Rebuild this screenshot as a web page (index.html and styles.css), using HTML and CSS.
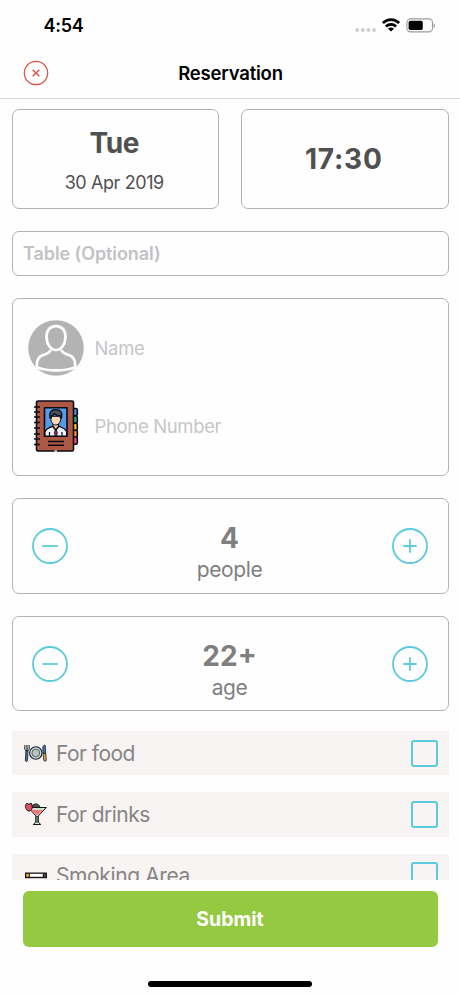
FILE: index.html
```
<!DOCTYPE html>
<html lang="en">
<head>
<meta charset="utf-8">
<meta name="viewport" content="width=device-width, initial-scale=1">
<title>Reservation</title>
<link rel="stylesheet" href="styles.css">
</head>
<body>
<div class="screen">
  <div class="status">
    <span class="clock">4:54</span>
    <div class="indicators">
      <svg class="signal" width="22" height="4" viewBox="0 0 22 4" fill="#cfcfcf"><circle cx="2.2" cy="2" r="2"/><circle cx="7.8" cy="2" r="2"/><circle cx="13.4" cy="2" r="2"/><circle cx="19" cy="2" r="2"/></svg>
      <svg class="wifi" width="18" height="14" viewBox="0 0 18 14" fill="none" stroke="#000" stroke-width="2.7"><path d="M.9 5.1C5.4.5 12.6.5 17.1 5.1"/><path d="M3.9 8.5C6.8 5.7 11.2 5.7 14.1 8.5"/><path d="M9 13.4 6 10.7c1.8-1.6 4.2-1.6 6 0z" fill="#000" stroke="none"/></svg>
      <svg class="battery" width="30" height="15" viewBox="0 0 30 15"><rect x=".9" y=".9" width="25.6" height="13" rx="3.8" fill="none" stroke="#9c9c9c" stroke-width="1.1"/><rect x="2.6" y="2.7" width="14.2" height="9.4" rx="1.8"/><path d="M27.6 5.2c1.9.7 1.9 3.9 0 4.6z" fill="#9c9c9c"/></svg>
    </div>
  </div>
  <header class="header">
    <svg class="close" width="26" height="26" viewBox="0 0 26 26" fill="none" stroke="#e0503f" stroke-width="1.2"><circle cx="13" cy="13" r="11.7"/><path d="m9.7 9.7 6.6 6.6m0-6.6-6.6 6.6" stroke-width="1.4"/></svg>
    <h1 class="title">Reservation</h1>
  </header>
  <main class="content">
    <section class="when">
      <div class="card date"><strong class="big day">Tue</strong><span class="full-date">30 Apr 2019</span></div>
      <div class="card time"><strong class="big hour">17:30</strong></div>
    </section>
    <div class="card table"><span class="table-label">Table (Optional)</span></div>
    <section class="card contact">
      <div class="field">
        <svg class="avatar" width="56" height="56" viewBox="0 0 56 56"><circle cx="28" cy="28" r="27.8" fill="#b3b3b3"/><g fill="none" stroke="#fff" stroke-width="2.7" stroke-linecap="round" stroke-linejoin="round"><path d="M28 6.2c-6.4 0-9.8 4.6-9.5 10.8.3 7.500 4 13 9.500 13s9.200-5.500 9.500-13C37.800 10.800 34.400 6.200 28 6.200z"/><path d="M22.200 30.900c-1.700 2.600-4.700 3.200-7.800 4.400-4.600 1.700-5.500 5-5.700 10.200-.1 1.300.4 1.800 1.500 2.200 10.300 3.600 25.300 3.600 35.600 0 1.100-.4 1.600-.9 1.500-2.200-.2-5.200-1.100-8.500-5.700-10.200-3.100-1.200-6.100-1.800-7.800-4.400"/></g></svg>
        <span class="placeholder name">Name</span>
      </div>
      <div class="field">
        <svg class="book" width="56" height="56" viewBox="0 0 56 56" stroke="#0a0a12" stroke-width="1.6" stroke-linejoin="round">
          <rect x="43" y="10.5" width="6.3" height="7.2" rx="1.5" fill="#438fe8"/><rect x="43" y="18" width="6.3" height="7.2" rx="1.5" fill="#22b78e"/><rect x="43" y="25.3" width="6.3" height="7.2" rx="1.5" fill="#f5be39"/><rect x="43" y="32.3" width="6.3" height="7.2" rx="1.5" fill="#f39b2c"/><rect x="43" y="39" width="6.3" height="7.2" rx="1.5" fill="#ee5370"/>
          <rect x="8.5" y="3" width="37" height="50" rx="1.5" fill="#ad5745"/>
          <path d="M6 9h6M6 14h6M6 19h6M6 24.5h6M6 30h6M6 36h6M6 41h6M6 46.5h6" stroke-width="1.5"/>
          <rect x="16.5" y="9.7" width="22.5" height="28.6" fill="#559bea"/>
          <path d="M17 38v-4c.5-3.5 4.5-4.7 8.5-6h4.7c4 1.3 8 2.5 8.4 6v4z" fill="#edf2fa" stroke-width="1.2"/>
          <path d="M25 25v4.2l2.8 3 2.8-3V25z" fill="#f1c49d" stroke-width="1"/>
          <path d="M22.7 18.3c-.2 5 1.7 8.7 5.1 8.7s5.3-3.7 5.1-8.7z" fill="#ffd9b3" stroke-width="1"/>
          <path d="M22 20c-1.3-5.4.8-8.4 5.8-8.4s7.1 3 5.8 8.4h-1.2v-2.7c-2.8.6-5-.4-6.300-1.800-.3 1.400-1.300 2.100-2.700 2.300V20z" fill="#4a515b" stroke-width="1.2"/>
          <path d="m27.800 31-1.300 3.200.5 3.800h1.700l.5-3.800z" fill="#b82e48" stroke-width=".9"/><path d="m24.500 28 3.300 4 3.300-4M21.500 34v4M34 34v4" fill="none" stroke-width="1.2"/>
          <path d="M20 43.500h16M20 47.300h16"/><path d="M26.500 53h2.500" stroke="#e9d7cf"/>
        </svg>
        <span class="placeholder phone">Phone Number</span>
      </div>
    </section>
    <section class="card stepper people">
      <svg class="step" width="38" height="38" viewBox="0 0 38 38"><circle cx="19" cy="19" r="17"/><path d="M11.3 19h15.5"/></svg>
      <div class="amount"><strong class="big">4</strong><span class="unit">people</span></div>
      <svg class="step" width="38" height="38" viewBox="0 0 38 38"><circle cx="19" cy="19" r="17"/><path d="M12.3 19h13.4M19 12.3v13.4"/></svg>
    </section>
    <section class="card stepper age">
      <svg class="step" width="38" height="38" viewBox="0 0 38 38"><circle cx="19" cy="19" r="17"/><path d="M11.3 19h15.5"/></svg>
      <div class="amount"><strong class="big">22+</strong><span class="unit">age</span></div>
      <svg class="step" width="38" height="38" viewBox="0 0 38 38"><circle cx="19" cy="19" r="17"/><path d="M12.3 19h13.4M19 12.3v13.4"/></svg>
    </section>
    <div class="options">
      <div class="option">
        <svg class="icon" width="24" height="24" viewBox="0 0 24 24" stroke="#15191d" stroke-width=".8" stroke-linejoin="round"><path d="M1.9 9 1.400 19.500c.2 1.300 2 1.300 2.100 0L4 9z" fill="#3976b8"/><path d="M.7 4v4.500l1.600 1.300h1.300l1.700-1.300V4M2.200 4v4.500M3.800 4v4.500" fill="none"/><circle cx="11.8" cy="12" r="6.2" fill="#d3dcd9" stroke-width="1.1"/><circle cx="11.8" cy="12" r="3.9" fill="#b6c6c1" stroke="#35474b"/><path d="M18.9 12.500V6c.2-1.500 1.300-2 2.300-1.700l.5 9z" fill="#397cc4"/><path d="M19 12.300h2.700l.6 6.700c0 1.600-2.400 1.600-2.500 0z" fill="#dda34e"/></svg>
        <span class="option-label food">For food</span><span class="check"></span>
      </div>
      <div class="option">
        <svg class="icon" width="24" height="24" viewBox="0 0 24 24" stroke="#171717" stroke-width="1" stroke-linejoin="round"><path d="M8 5.500c0-4.500 7-5 8 0z" fill="#465744"/><path d="M4.500 5.500h17.800L14.200 14v6l2.600 2.500H9.200l2.700-2.500v-6z" fill="#d8ded0"/><path d="M7.200 7.900h12L13 13.400z" fill="#f3757f" stroke="none"/><path d="M12 14.500h2V20h-2z" fill="#72a99d" stroke-width=".7"/><path d="M2.500 1.500 5 2.200l2.500-.9.800 4.200C7.900 8.300 5.600 9.600 3.700 8.700 1.700 7.600.7 3.400 2.500 1.500z" fill="#e94c60"/></svg>
        <span class="option-label drinks">For drinks</span><span class="check"></span>
      </div>
      <div class="option">
        <svg class="icon" width="24" height="24" viewBox="0 0 24 24"><path d="M1 8.500h22v5.700H1z" fill="#171218"/><path d="M2.300 9.800h2.500v3H2.300z" fill="#f4b323"/><path d="M5.800 9.800h13v3h-13z" fill="#fff"/><path d="M20 9.800h1.800v3H20z" fill="#514e56"/></svg>
        <span class="option-label smoking">Smoking Area</span><span class="check"></span>
      </div>
    </div>
  </main>
  <footer class="footer">
    <button class="submit"><span>Submit</span></button>
    <div class="home"></div>
  </footer>
</div>
</body>
</html>
```

FILE: styles.css
```
* { box-sizing: border-box; }

body {
  margin: 0;
  background: #fefefe;
  font-family: Inter, "Liberation Sans", sans-serif;
}

.screen {
  display: flex;
  flex-direction: column;
  width: 460px;
  height: 996px;
  overflow: hidden;
}

.status {
  display: flex;
  justify-content: space-between;
  height: 50px;
  padding: 15px 24px 0 43.5px;
}

.clock {
  font-size: 18px;
  font-weight: 600;
  line-height: 22px;
  letter-spacing: -0.3px;
}

.indicators { display: flex; }
.signal { margin: 13px 5px 0 0; }
.wifi { margin-top: 3px; }
.battery { margin: 2.5px 0 0 6px; }

.header {
  display: grid;
  grid-template-columns: 26px 1fr 26px;
  align-items: center;
  height: 49px;
  padding: 0 23px 2px;
  border-bottom: 1px solid #dadada;
}

.title {
  margin: 0 0 0 1px;
  font-size: 18.5px;
  font-weight: 600;
  line-height: 24px;
  letter-spacing: -0.2px;
  text-align: center;
}

.content {
  display: flex;
  flex-direction: column;
  flex: none;
  gap: 22px;
  height: 781px;
  padding: 10px 11.5px 0;
  overflow: hidden;
}

.card {
  flex: none;
  border: 1.5px solid #b2b2b2;
  border-radius: 7px;
}

.when {
  display: grid;
  grid-template-columns: 1fr 1fr;
  gap: 22px;
  flex: none;
  height: 100.4px;
}

.date, .time {
  display: flex;
  flex-direction: column;
  align-items: center;
  color: #505050;
}

.date { padding: 14px 2px 0 0; }
.time { justify-content: center; }

.big {
  font-size: 28px;
  font-weight: 700;
  line-height: 38px;
}

.day { letter-spacing: -0.4px; }
.hour { padding-right: 2px; letter-spacing: 0.8px; }

.full-date {
  margin-top: 9px;
  font-size: 18px;
  line-height: 24px;
  letter-spacing: -0.4px;
}

.table {
  display: flex;
  align-items: center;
  height: 44.6px;
  padding-left: 10.5px;
  color: #c2c2c5;
  font-size: 18px;
  font-weight: 600;
  letter-spacing: -0.08px;
}

.contact {
  display: flex;
  flex-direction: column;
  gap: 22px;
  height: 178px;
  padding: 21px 15px;
}

.field { display: flex; align-items: center; gap: 11px; }
.placeholder { color: #c6c6c9; font-size: 18.5px; letter-spacing: -0.35px; }

.stepper {
  display: grid;
  grid-template-columns: 38px 1fr 38px;
  height: 95.7px;
  padding: 20px 18.5px 0;
}

.step {
  margin-top: 8px;
  fill: none;
  stroke: #5bcbdc;
  stroke-width: 1.8;
}

.amount {
  display: flex;
  flex-direction: column;
  align-items: center;
  padding-right: 1px;
  color: #7f7f7f;
}

.unit { font-size: 21px; line-height: 26px; letter-spacing: -0.4px; }

.options {
  display: flex;
  flex-direction: column;
  flex: none;
  gap: 17px;
  margin-top: -2.400px;
}

.option {
  display: flex;
  align-items: center;
  height: 44.3px;
  padding: 0 11px 0 12px;
  background: #f7f4f3;
}

.option-label {
  margin-left: 8.5px;
  color: #858585;
  font-size: 21px;
  letter-spacing: -0.55px;
}

.smoking { letter-spacing: -0.38px; }

.check {
  width: 27px;
  height: 27px;
  margin-left: auto;
  border: 2px solid #5bcbdc;
  border-radius: 3px;
}

.footer {
  display: flex;
  flex-direction: column;
  align-items: center;
  padding-top: 11px;
}

.submit {
  width: 415px;
  height: 56px;
  padding: 0;
  border: 0;
  border-radius: 6px;
  background: #94c941;
  color: #fff;
  font: 700 19.5px/24px Inter, "Liberation Sans", sans-serif;
}

.home {
  width: 164px;
  height: 6px;
  margin-top: 34px;
  border-radius: 3px;
  background: #000;
}
```
